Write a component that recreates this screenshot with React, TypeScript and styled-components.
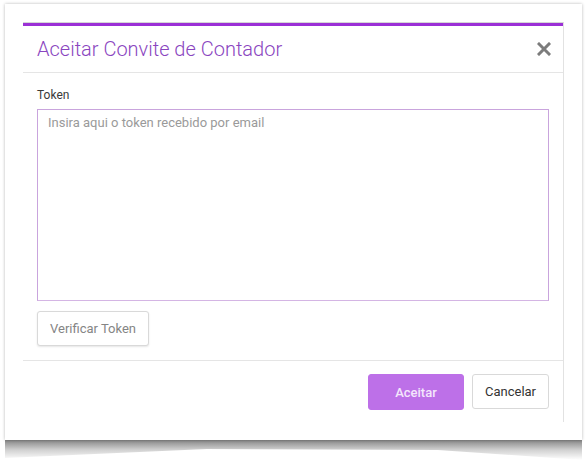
import React from 'react'
import styled, { createGlobalStyle } from 'styled-components'

const GlobalStyle = createGlobalStyle`
  html, body {
    margin: 0;
    padding: 0;
    background: #fff;
  }
  body {
    font-family: Roboto, "Liberation Sans", Arial, sans-serif;
    width: 588px;
    height: 462px;
    overflow: hidden;
  }
`

const Page = styled.div`
  padding: 4px 6px 0 5px;
`

const Frame = styled.div`
  position: relative;
  width: 577px;
  height: 436px;
  background: #fff;
  box-shadow: 0 0 3px rgba(0, 0, 0, 0.28);
  padding: 18px 0 0 18px;
  box-sizing: border-box;

  &::after {
    content: '';
    position: absolute;
    left: 0;
    right: 0;
    top: 100%;
    height: 20px;
    background: linear-gradient(180deg, rgba(0, 0, 0, 0.48) 0%, rgba(0, 0, 0, 0.18) 50%, rgba(0, 0, 0, 0) 100%);
    clip-path: polygon(0 0, 100% 0, 100% 100%, 75% 50%, 35% 45%, 0 90%);
  }
`

const Modal = styled.div`
  width: 541px;
  height: 400px;
  box-sizing: border-box;
  background: #fff;
  border-top: 1px solid #d6d6d6;
  border-right: 1px solid #e2e2e2;
  display: flex;
  flex-direction: column;
`

const Header = styled.div`
  height: 46px;
  border-top: 3px solid #9b30d6;
  border-bottom: 1px solid #e5e5e5;
  padding: 0 12px 0 14px;
  display: flex;
  align-items: center;
  justify-content: space-between;
`

const Title = styled.h4`
  margin: 0;
  font-size: 20px;
  font-weight: 300;
  color: #8a45c0;
`

const Close = styled.button`
  border: none;
  background: none;
  padding: 0;
  width: 14px;
  height: 14px;
  display: flex;
  cursor: pointer;
`

const Body = styled.div`
  padding: 14px;
  border-bottom: 1px solid #e5e5e5;
  display: flex;
  flex-direction: column;
  align-items: flex-start;
`

const Label = styled.label`
  font-size: 12px;
  line-height: 16px;
  color: #3a3a3a;
  margin-bottom: 6px;
`

const TokenInput = styled.textarea`
  width: 512px;
  height: 192px;
  box-sizing: border-box;
  border: 1px solid #c9a4dd;
  border-bottom-color: #d4b5e4;
  border-radius: 0;
  padding: 4px 10px;
  font-family: Roboto, "Liberation Sans", Arial, sans-serif;
  font-size: 13px;
  line-height: 18px;
  color: #444;
  resize: none;
  outline: none;
  caret-color: #555;

  &::placeholder {
    color: #9a9a9a;
  }
`

const Button = styled.button<{ $primary?: boolean }>`
  height: ${p => (p.$primary ? '36px' : '35px')};
  box-sizing: border-box;
  padding: 0;
  white-space: nowrap;
  font-family: Roboto, "Liberation Sans", Arial, sans-serif;
  font-size: 13px;
  border-radius: 3px;
  cursor: pointer;
  border: 1px solid ${p => (p.$primary ? '#bd70e8' : '#d9d9d9')};
  background: ${p => (p.$primary ? '#bd70e8' : '#fff')};
  color: ${p => (p.$primary ? '#f4e6fc' : '#333')};
  font-weight: ${p => (p.$primary ? 500 : 400)};
`

const VerifyButton = styled(Button)`
  margin-top: 10px;
  width: 112px;
  color: #858585;
  box-shadow: 0 1px 2px rgba(0, 0, 0, 0.1);
`

const Footer = styled.div`
  padding: 13px 14px 12px;
  display: flex;
  justify-content: flex-end;
  gap: 8px;
`

const AcceptButton = styled(Button)`
  width: 96px;
`

const CancelButton = styled(Button)`
  width: 77px;
  height: 35px;
`

function CloseIcon() {
  return (
    <svg width="14" height="14" viewBox="0 0 14 14">
      <path d="M2 2 L12 12 M12 2 L2 12" stroke="#7c7c7c" strokeWidth="3" strokeLinecap="square" />
    </svg>
  )
}

export default function App() {
  return (
    <>
      <GlobalStyle />
      <Page>
        <Frame>
          <Modal>
            <Header>
              <Title>Aceitar Convite de Contador</Title>
              <Close aria-label="Fechar">
                <CloseIcon />
              </Close>
            </Header>
            <Body>
              <Label htmlFor="token">Token</Label>
              <TokenInput id="token" autoFocus placeholder="Insira aqui o token recebido por email" />
              <VerifyButton>Verificar Token</VerifyButton>
            </Body>
            <Footer>
              <AcceptButton $primary>Aceitar</AcceptButton>
              <CancelButton>Cancelar</CancelButton>
            </Footer>
          </Modal>
        </Frame>
      </Page>
    </>
  )
}
